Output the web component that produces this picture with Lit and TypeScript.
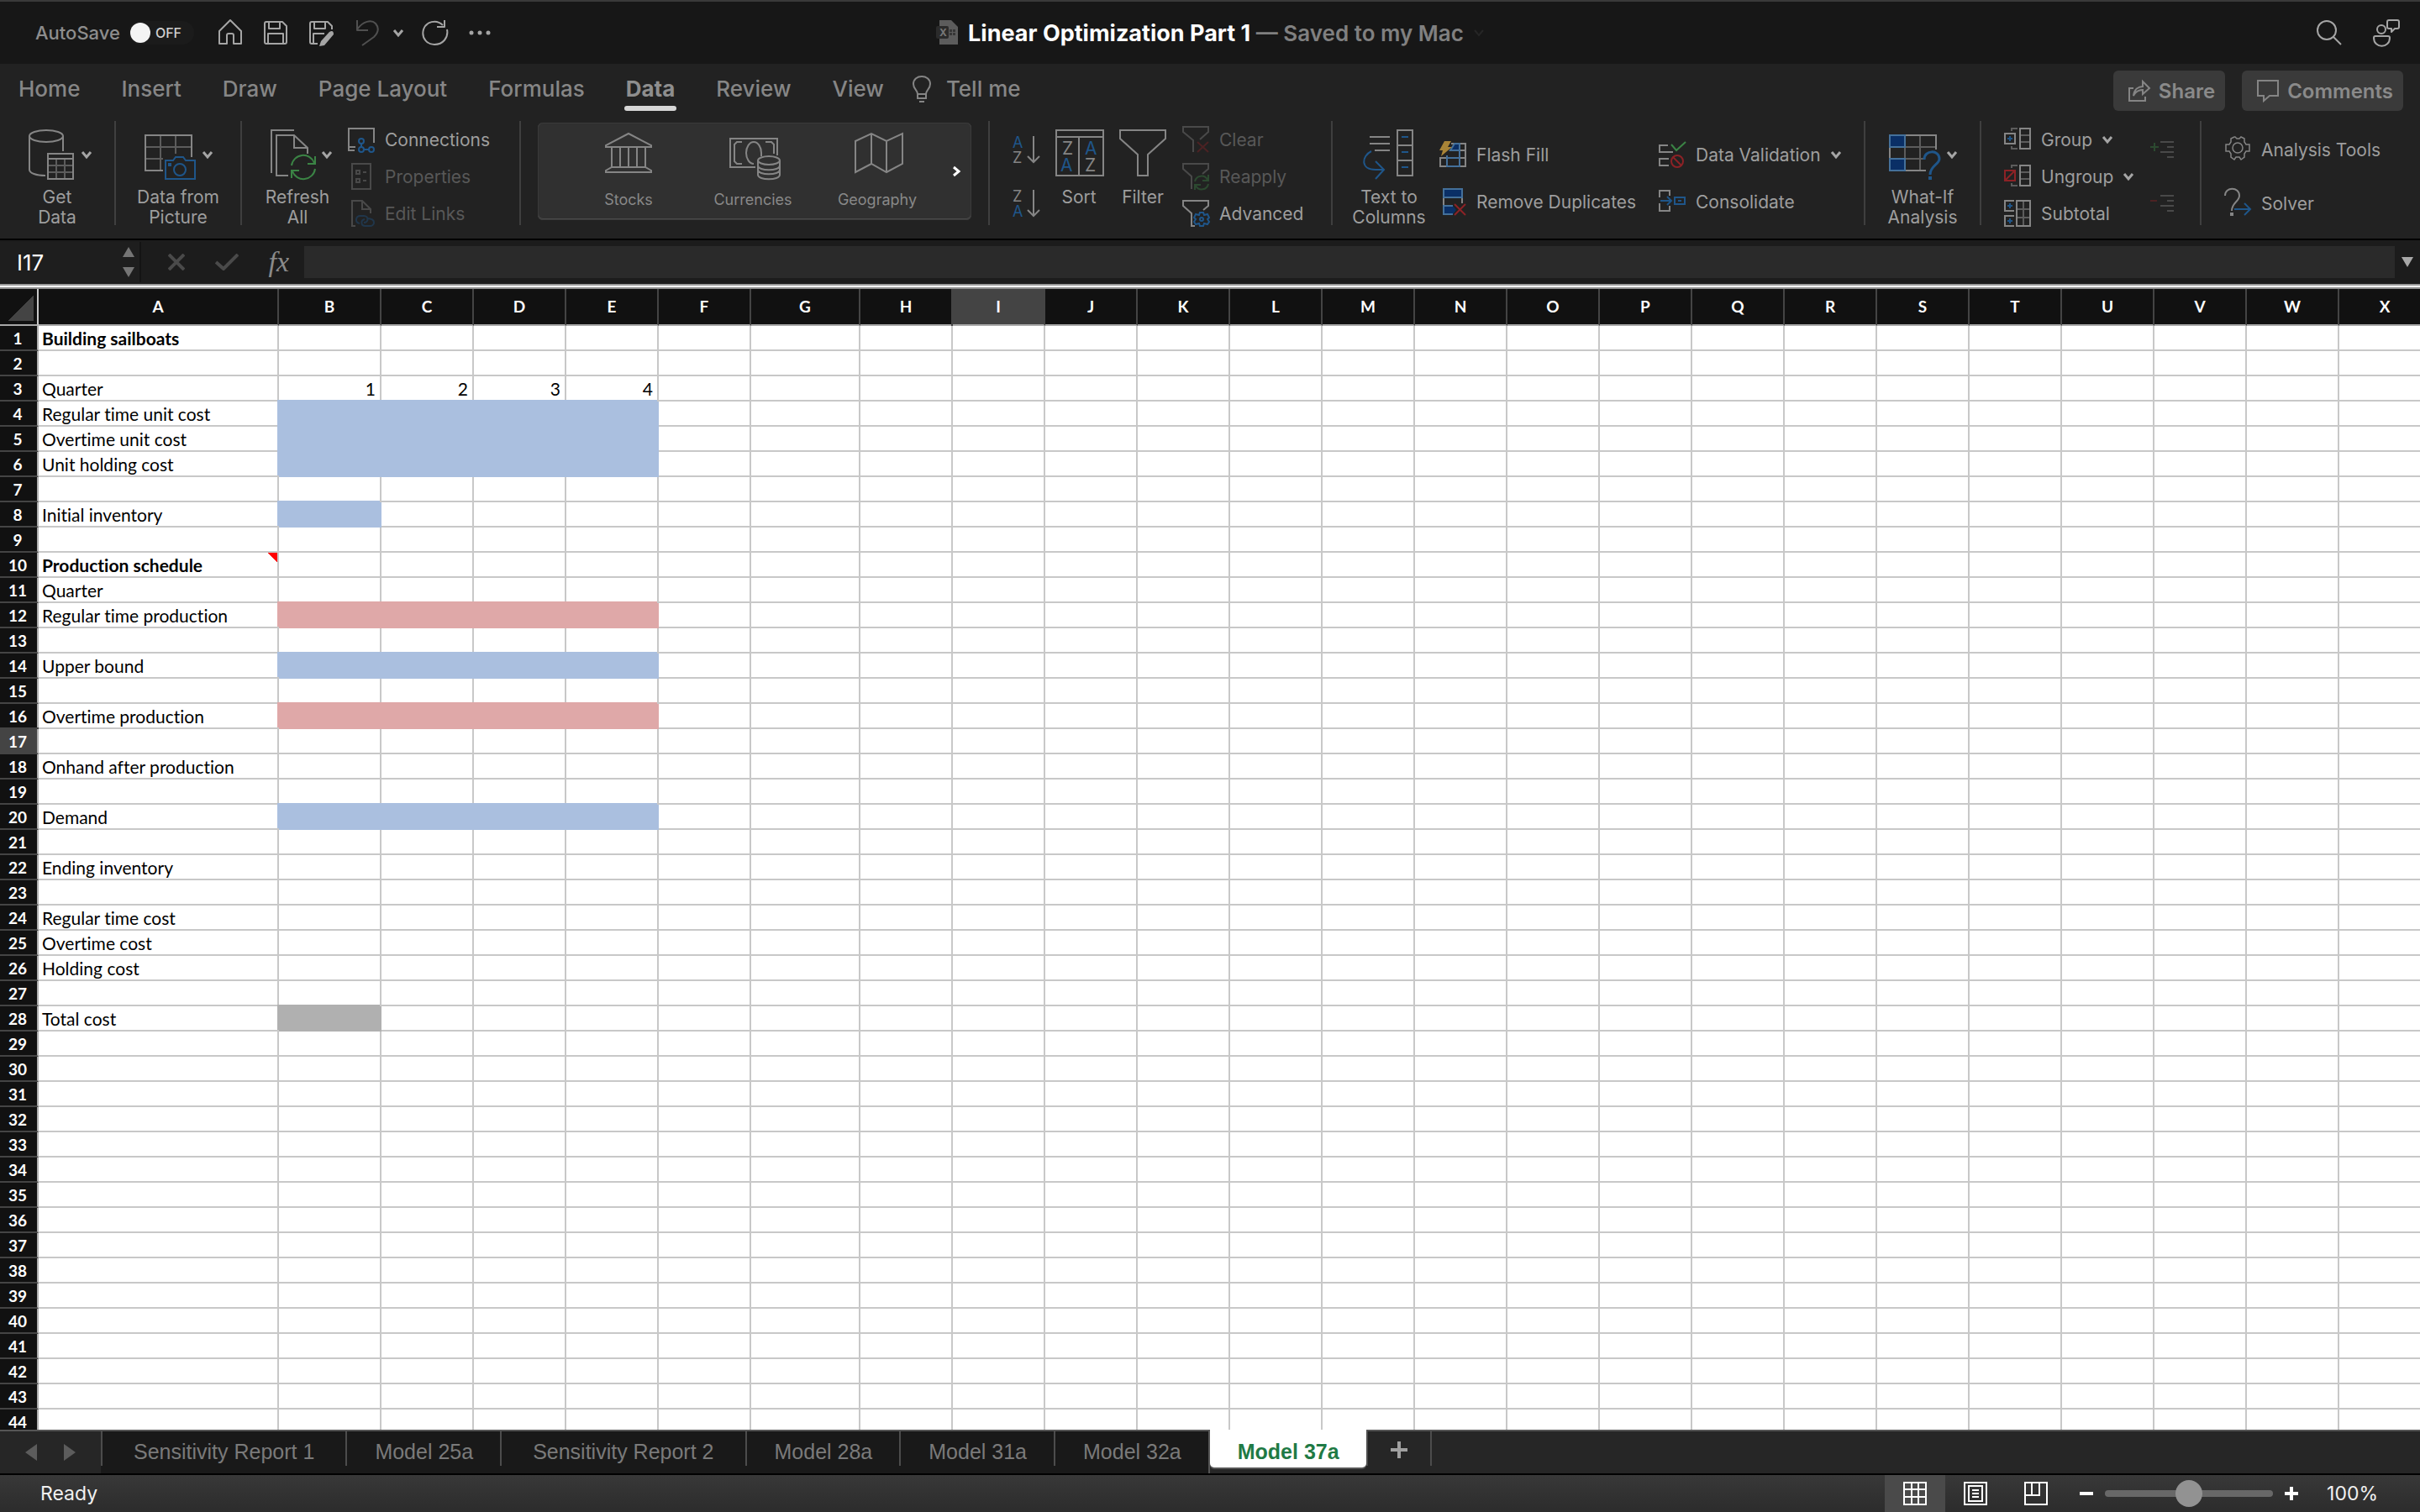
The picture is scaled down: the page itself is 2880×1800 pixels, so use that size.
import { LitElement, html, svg, css, nothing, TemplateResult } from "lit";
import { customElement, state } from "lit/decorators.js";
import { classMap } from "lit/directives/class-map.js";

/* ---------- icon helpers ---------- */

const icon = (w: number, h: number, body: unknown, cls = "") => html`
  <svg class="icon ${cls}" width=${w} height=${h} viewBox="0 0 ${w} ${h}" aria-hidden="true">${body}</svg>`;

const funnel = svg`<path class="s" d="M21 16L31 7V1H1V7L13 17V31"/>`;
const chevron = () => icon(12, 8, svg`<path class="chev" d="M1 1L6 7L11 1"/>`);

const big: Record<string, TemplateResult> = {
  getData: icon(60, 60, svg`
    <ellipse class="s" cx="28" cy="8" rx="20" ry="7"/>
    <path class="s" d="M8 8V48C8 52 16 55 27 55M48 8V26"/>
    <path class="s dim" d="M30 43H60M30 51H60M40 35V59M50 35V59"/>
    <path class="s" d="M30 29H60V59H30ZM30 35H60"/>`),
  picture: icon(60, 60, svg`
    <path class="s dim" d="M20 7V49M38 7V29M2 21H57M2 35H23"/>
    <path class="s" d="M57 33V7H2V49H23"/>
    <path class="blue" d="M26 37H35L38 33H47L50 37H61V59H26Z"/>
    <circle class="blue" cx="43" cy="48" r="7"/>
    <path class="bluefill" d="M29 40h4v4h-4z"/>`),
  refresh: icon(60, 60, svg`
    <path class="s" d="M37 1H10V52M30 55H16V7H37L53 22V29M37 7V22H53"/>
    <path class="green" d="M34 43A14 14 0 0 1 61 40M62 32V41H53M62 47A14 14 0 0 1 35 50M34 58V49H43"/>`),
  stocks: icon(60, 60, svg`
    <path class="s" d="M30 5L57 19V21H3V19ZM10 21V45M20 21V45M30 21V45M40 21V45M50 21V45M10 45H50L57 49V51H3V49Z"/>`),
  currencies: icon(60, 60, svg`
    <path class="s" d="M59 31V11H3V45H33M17 15H11L8 18V38L11 41H17M45 15H52L55 18V29"/>
    <path class="s" d="M40 32V28C40 21 36 15 31 15S22 21 22 28S26 41 31 41"/>
    <ellipse class="s" cx="49" cy="37" rx="13" ry="5"/>
    <path class="s" d="M36 37V54C36 61 62 61 62 54V37M36 43C36 50 62 50 62 43M36 48C36 55 62 55 62 48"/>`),
  geography: icon(60, 60, svg`
    <path class="s" d="M4 14L23 5L41 14L60 5V41L41 51L23 41L4 51ZM23 5V41M41 14V51"/>`),
  sort: icon(60, 60, svg`
    <path class="s" d="M3 1H59V55H3ZM3 9H59M30 9V55"/>
    <text class="tg" x="10" y="30" font-size="21">Z</text>
    <text class="tb" x="8" y="50" font-size="21">A</text>
    <text class="tb" x="37" y="30" font-size="21">A</text>
    <text class="tg" x="37" y="50" font-size="21">Z</text>`),
  filter: icon(60, 60, svg`<path class="s" d="M3 1H57V11L36 30V55H24V30L3 11Z"/>`),
  columns: icon(60, 60, svg`
    <path class="s" d="M7 9H31M7 17H31M13 25H31M40 1H58V55H40ZM40 19H58M40 37H58"/>
    <path class="blue" d="M9 26C-3 32 -4 48 14 48H24M14 38L24 48L14 59M45 9H53M45 27H53M45 45H53"/>`),
  whatIf: icon(60, 60, svg`
    <path class="s dim" d="M20 7V49M38 7V49M2 21H57M2 35H42"/>
    <path class="s" d="M57 24V7H2V49H45"/>
    <path class="cell" d="M2 7H20V21H2ZM2 35H20V49H2Z"/>
    <path class="blue wide" d="M43 36C43 24 61 24 61 35C61 42 50 43 50 54"/>
    <path class="bluefill" d="M48 56h4v4h-4z"/>`),
};

const small: Record<string, TemplateResult> = {
  connections: icon(32, 32, svg`
    <path class="s" d="M8 29H1V3H31V20M1 25H9"/>
    <path class="blue" d="M16 21V25M19 28H25"/>
    <circle class="blue" cx="16" cy="18" r="3"/><circle class="blue" cx="16" cy="28" r="3"/><circle class="blue" cx="28" cy="28" r="3"/>`),
  properties: icon(32, 32, svg`
    <path class="s" d="M5 1H27V31H5ZM10 9h4v4h-4zM10 19h4v4h-4zM18 11h4M18 21h4"/>`),
  editLinks: icon(32, 32, svg`
    <path class="s" d="M9 31H5V1H17L27 11V16M17 1V11H27"/>
    <path class="blue" d="M14 28C8 27 9 19 15 19H19C25 19 25 27 19 27M24 22C34 23 32 31 26 31H21C15 31 15 24 20 23"/>`),
  clear: icon(32, 32, svg`${funnel}<path class="red" d="M18 19L31 31M31 19L18 31"/>`),
  reapply: icon(32, 32, svg`
    <path class="s" d="M24 13L31 7V1H1V7L11 16V31"/>
    <path class="green" d="M15 22A8 8 0 0 1 30 20M31 14V21H24M31 25A8 8 0 0 1 16 27M15 32V26H22"/>`),
  advanced: icon(32, 32, svg`
    <path class="s" d="M25 12L31 7V1H1V7L11 16V31H15"/>
    <path class="blue" d="M21 15h4l1 3 4-1 2 4-2 2 2 3-2 3-4-1-1 3h-4l-1-3-4 1-2-3 2-3-2-2 2-4 4 1z"/>
    <circle class="blue" cx="23" cy="23" r="2"/>`),
  flash: icon(32, 32, svg`
    <path class="s" d="M14 3H31V30H1V20H31M12 11H31M1 20V30M9 30V20M24 3V30"/>
    <path class="cell" d="M24 3V11H13L18 3Z"/>
    <path class="lightblue" d="M24 3V30H9V17M9 20H24M24 11H13"/>
    <path class="bolt" d="M6 0H14L10 7H15L2 18L4 11H0Z"/>`),
  duplicates: icon(32, 32, svg`
    <path class="s" d="M5 11V21M27 11V18"/>
    <path class="cell" d="M5 1H27V11H5Z"/>
    <path class="cellfill" d="M5 21H16L20 26L16 31H5Z"/>
    <path class="lightblue" d="M16 21H5V31H16"/>
    <path class="red" d="M18 19L31 32M31 19L18 32"/>`),
  validation: icon(32, 32, svg`
    <path class="s" d="M11 5H1V13H17M12 21H1V29H12"/>
    <path class="green" d="M15 4L21 11L32 1"/>
    <circle class="red" cx="22" cy="24" r="7"/><path class="red" d="M17 19L27 29"/>`),
  consolidate: icon(32, 32, svg`
    <path class="s" d="M1 11V3H13V9M1 18V27H13V21"/>
    <path class="blue" d="M2 15H14M10 10L15 15L10 20M19 11H31V19H19ZM23 15H27"/>`),
  group: icon(32, 32, svg`
    <path class="s dim" d="M16 3H9V6M16 27H9V24M19 11H31M19 19H31"/>
    <path class="s" d="M19 3H31V27H19ZM1 9H13V21H1Z"/>
    <path class="blue" d="M4 15H10M7 12V18"/>`),
  ungroup: icon(32, 32, svg`
    <path class="s dim" d="M16 3H9V6M16 27H9V24M19 11H31M19 19H31"/>
    <path class="s" d="M19 3H31V27H19Z"/>
    <path class="red" d="M1 9H13V21H1ZM2 20L12 10"/>`),
  subtotal: icon(32, 32, svg`
    <path class="s dim" d="M23 1V31M15 11H31M15 21H31"/>
    <path class="s" d="M15 1H31V31H15ZM12 1H1V13H12M12 19H1V31H12"/>
    <path class="blue" d="M4 7H10M7 4V10M4 25H10M7 22V28"/>`),
  analysis: icon(32, 32, svg`
    <path class="s thin" d="M13 1L15 3H18L20 1L24 3V7L26 10H30V18H26L24 21V25L20 28L18 25H14L12 28L8 25V21L6 18H2V10H6L8 7V3L12 1Z"/>
    <circle class="s thin" cx="16" cy="14" r="6"/>`),
  solver: icon(32, 32, svg`
    <path class="s" d="M1 7C1 -4 18 -4 18 7C18 14 9 15 9 25"/>
    <path class="grayfill" d="M7 27h4v4h-4z"/>
    <path class="blue" d="M12 23H31M24 16L31 23L24 30"/>`),
  showDetail: icon(32, 32, svg`
    <path class="s" d="M14 7H30M22 13H30M14 19H30M22 25H30"/><path class="green" d="M2 13H12M7 8V18"/>`),
  hideDetail: icon(32, 32, svg`
    <path class="s" d="M14 7H30M22 13H30M14 19H30M22 25H30"/><path class="red" d="M2 13H10"/>`),
  az: icon(32, 32, svg`
    <text class="tb" x="0" y="14" font-size="18">A</text><text class="tg" x="0" y="32" font-size="18">Z</text>
    <path class="s" d="M25 0V30M18 24L25 31L32 24"/>`),
  za: icon(32, 32, svg`
    <text class="tg" x="0" y="14" font-size="18">Z</text><text class="tb" x="0" y="32" font-size="18">A</text>
    <path class="s" d="M25 0V30M18 24L25 31L32 24"/>`),
  home: icon(32, 32, svg`<path class="t" d="M3 14L16 1L29 14V29H20V19Q20 17 18 17H14Q12 17 12 19V29H3Z"/>`),
  save: icon(32, 32, svg`
    <path class="t" d="M5 3H24L29 8V27Q29 29 27 29H5Q3 29 3 27V5Q3 3 5 3ZM8 3V11H21V3M7 29V17H25V29"/>`),
  saveEdit: icon(32, 32, svg`
    <path class="t" d="M12 29H5Q3 29 3 27V5Q3 3 5 3H24L29 8V12M8 3V11H21V3M7 29V17H20"/>
    <path class="tfill" d="M26 15Q31 12 31 18L20 31L14 32L16 26Z"/>`),
  undo: icon(32, 32, svg`<path class="t" d="M5 1V13H18M5 12C12 2 22 0 27 5C32 11 29 17 25 21L11 31"/>`),
  redo: icon(32, 32, svg`<path class="t" d="M25 7C17 -1 5 3 2 12C-1 23 7 30 15 30C25 30 32 22 30 12M27 1V9H18"/>`),
  more: icon(32, 32, svg`<g class="tfill"><circle cx="5" cy="16" r="2.5"/><circle cx="15" cy="16" r="2.5"/><circle cx="25" cy="16" r="2.5"/></g>`),
  search: icon(32, 32, svg`<circle class="t" cx="13" cy="13" r="11"/><path class="t" d="M21 21L30 30"/>`),
  presence: icon(32, 32, svg`
    <path class="t" d="M19 1H29Q31 1 31 3V9Q31 11 29 11H26L22 15V11H19Q17 11 17 9V3Q17 1 19 1Z"/>
    <circle class="t" cx="10" cy="12" r="5"/>
    <path class="t" d="M3 20H18Q20 20 20 22C20 35 1 35 1 22Q1 20 3 20Z"/>`),
  bulb: icon(24, 32, svg`
    <path class="s" d="M7 22C7 17 2 16 2 10C2 -2 22 -2 22 10C22 16 17 17 17 22ZM7 22V27H17V22M9 31H15"/>`),
  share: icon(26, 26, svg`
    <path class="s" d="M6 10H1V25H20V20M6 19C7 11 12 8 17 8V2L25 10L17 17V12C12 12 8 15 6 19Z"/>`),
  comment: icon(26, 26, svg`<path class="s" d="M1 1H25V19H15L8 25V19H1Z"/>`),
  workbook: icon(26, 30, svg`
    <path fill="#5c5c5c" d="M4 0H18L26 8V29H4Z"/><path fill="#363636" d="M16 11h3v3h-3zM20 11h3v3h-3zM16 15h3v3h-3zM20 15h3v3h-3z"/>
    <rect fill="#2b2b2b" x="0" y="7" width="15" height="15" rx="2"/>
    <text x="4" y="19" font-size="12" fill="#777">X</text>`),
};

/* ---------- data ---------- */

const COLUMNS: [string, number][] = [
  ["A", 286], ["B", 122], ["C", 110], ["D", 110], ["E", 110], ["F", 110], ["G", 130],
  ..."HIJKLMNOPQRSTUVWX".split("").map((c) => [c, 110] as [string, number]),
];

const LABELS: Record<number, string> = {
  1: "Building sailboats", 3: "Quarter", 4: "Regular time unit cost", 5: "Overtime unit cost",
  6: "Unit holding cost", 8: "Initial inventory", 10: "Production schedule", 11: "Quarter",
  12: "Regular time production", 14: "Upper bound", 16: "Overtime production",
  18: "Onhand after production", 20: "Demand", 22: "Ending inventory", 24: "Regular time cost",
  25: "Overtime cost", 26: "Holding cost", 28: "Total cost",
};

const FILLS: Record<number, [string, string]> = {
  4: ["BCDE", "blue"], 5: ["BCDE", "blue"], 6: ["BCDE", "blue"], 8: ["B", "blue"],
  12: ["BCDE", "pink"], 14: ["BCDE", "blue"], 16: ["BCDE", "pink"], 20: ["BCDE", "blue"], 28: ["B", "gray"],
};

const QUARTERS = "BCDE";
const BOLD_ROWS = [1, 10];
const SHEETS = ["Sensitivity Report 1", "Model 25a", "Sensitivity Report 2", "Model 28a", "Model 31a", "Model 32a", "Model 37a"];
const TABS = ["Home", "Insert", "Draw", "Page Layout", "Formulas", "Data", "Review", "View"];

const iconStyles = css`
  .icon { display: block; flex: none; overflow: visible; fill: none; }
  .icon text { font-family: Inter, "Liberation Sans", sans-serif; }
  .s { stroke: #858585; stroke-width: 2; }
  .s.dim { stroke: #5c5c5c; }
  .s.thin { stroke-width: 1.5; }
  .t { stroke: #a5a5a5; stroke-width: 2; stroke-linejoin: round; }
  .tfill { fill: #a5a5a5; }
  .grayfill { fill: #858585; }
  .blue { stroke: #1f568a; stroke-width: 2; }
  .blue.wide { stroke-width: 3; }
  .bluefill { fill: #1f568a; }
  .lightblue { stroke: #44709a; stroke-width: 2; }
  .cell { stroke: #44709a; stroke-width: 2; fill: #0a2f66; }
  .cellfill { fill: #0a2f66; }
  .green { stroke: #3b8445; stroke-width: 2; }
  .red { stroke: #8c2226; stroke-width: 2; }
  .bolt { fill: #a98437; }
  .chev { stroke: #a5a5a5; stroke-width: 3; }
  .tg { fill: #858585; }
  .tb { fill: #1f568a; }
`;

const controls = css`
  button, input {
    font: inherit; color: inherit; margin: 0; padding: 0; border: 0;
    background: none; border-radius: 0; outline: none;
  }
  button { display: flex; align-items: center; }
`;

/* ---------- title bar ---------- */

@customElement("title-bar")
class TitleBar extends LitElement {
  static styles = [controls, iconStyles, css`
    :host {
      display: grid; grid-template-columns: 1fr auto 1fr; align-items: center;
      height: 74px; padding: 0 24px; background: #171717; border-top: 2px solid #3a3a3a;
      color: #8d8d8d; font-size: 22px;
    }
    .tools { display: flex; align-items: center; gap: 22px; padding-left: 18px; }
    .autosave { display: flex; align-items: center; gap: 10px; font-weight: 500; margin-right: 5px; }
    .toggle { width: 78px; height: 28px; border-radius: 14px; background: #1b1b1b; gap: 6px; color: #d0d0d0; font-size: 16px; font-weight: 500; }
    .knob { width: 24px; height: 24px; border-radius: 50%; background: #f4f4f4; margin-left: 2px; }
    .undo { display: flex; align-items: center; gap: 16px; }
    .off { opacity: 0.4; }
    .title { display: flex; align-items: center; gap: 12px; margin: 0; font-size: 27px; font-weight: 700; white-space: pre; color: #fff; }
    .saved { color: #808080; font-size: 26px; font-weight: 600; }
    .title .chev { stroke: #262626; stroke-width: 2; }
    .right { display: flex; justify-content: flex-end; gap: 36px; }
  `];
  render() {
    return html`
      <div class="tools">
        <label class="autosave">AutoSave
          <button class="toggle" role="switch" aria-checked="false"><span class="knob"></span>OFF</button>
        </label>
        <button aria-label="Home">${small.home}</button>
        <button aria-label="Save">${small.save}</button>
        <button aria-label="Save As">${small.saveEdit}</button>
        <span class="undo">
          <button class="off" aria-label="Undo">${small.undo}</button>
          <button aria-label="Undo history">${chevron()}</button>
        </span>
        <button aria-label="Redo">${small.redo}</button>
        <button aria-label="More">${small.more}</button>
      </div>
      <h1 class="title">${small.workbook}<span>Linear Optimization Part 1<span class="saved"> — Saved to my Mac</span></span>${chevron()}</h1>
      <div class="right">
        <button aria-label="Search">${small.search}</button>
        <button aria-label="Presence">${small.presence}</button>
      </div>`;
  }
}

/* ---------- ribbon ---------- */

@customElement("ribbon-bar")
class RibbonBar extends LitElement {
  static styles = [controls, iconStyles, css`
    :host { display: block; background: #222; color: #9e9e9e; font-size: 21px; border-bottom: 2px solid #000; }
    .tabs { display: flex; align-items: center; justify-content: space-between; height: 60px; padding: 0 20px 0 22px; }
    .tablist { display: flex; gap: 49px; font-size: 26px; font-weight: 500; color: #868686; }
    .tab { height: 60px; border-bottom: 6px solid transparent; line-height: 30px; padding: 6px 0 0; box-sizing: border-box; position: relative; }
    .tab.active { font-weight: 700; color: #8e8e8e; }
    .tab.active::after { content: ""; position: absolute; left: -2px; right: -2px; bottom: -2px; height: 6px; border-radius: 3px; background: #d6d6d6; }
    .tell { gap: 17px; margin-left: -16px; }
    .actions { display: flex; gap: 20px; font-size: 24px; font-weight: 600; color: #8a8a8a; padding-top: 4px; }
    .action { height: 48px; padding: 0 12px 0 18px; gap: 10px; border-radius: 6px; background: #3a3a3a; }
    .body { display: flex; align-items: flex-start; padding: 8px 0; }
    .group { display: flex; height: 132px; flex: none; }
    .sep { width: 2px; height: 124px; background: #3f3f3f; flex: none; }
    .g1 { width: 136px; }
    .g2 { width: 148px; }
    .g3 { width: 330px; padding-left: 12px; box-sizing: border-box; gap: 6px; }
    .g4 { width: 556px; padding: 2px 20px 0; box-sizing: border-box; }
    .g5 { width: 406px; padding-left: 27px; box-sizing: border-box; gap: 9px; }
    .g6 { width: 632px; padding-left: 7px; box-sizing: border-box; }
    .g7 { width: 136px; }
    .g8 { width: 260px; padding-left: 27px; box-sizing: border-box; }
    .g9 { padding-left: 27px; }
    .big { flex: 1; flex-direction: column; padding-top: 10px; gap: 9px; line-height: 24px; text-align: center; justify-content: flex-start; }
    .g3 .big { flex: 0 0 108px; }
    .g5 .big { flex: 0 0 76px; }
    .g6 .big { flex: 0 0 120px; }
    .face { display: flex; align-items: center; gap: 10px; }
    .stack { display: grid; align-content: start; justify-items: start; grid-auto-rows: 44px; }
    .stack.two { grid-auto-rows: 56px; padding-top: 12px; }
    .stack.wide { grid-auto-rows: 64px; padding-top: 2px; }
    .g6 .first { width: 261px; }
    .g8 .first { width: 172px; }
    .small { gap: 12px; white-space: nowrap; }
    .disabled { color: #585858; }
    .disabled .icon { opacity: 0.4; }
    .gallery { display: flex; flex: 1; height: 116px; padding-left: 34px; border-radius: 6px; box-sizing: border-box; background: #303030; box-shadow: inset 0 0 0 1px #3a3a3a, inset 0 -1px 0 1px #4a4a4a; }
    .kind { flex-direction: column; width: 148px; padding-top: 8px; gap: 13px; font-size: 18px; line-height: 22px; justify-content: flex-start; color: #888; }
    .next { margin-left: 16px; }
    .next path { stroke: #fff; stroke-width: 3; }
  `];

  private bigBtn(ic: TemplateResult, a: string, b = "", menu = false) {
    return html`<button class="big"><span class="face">${ic}${menu ? chevron() : nothing}</span><span>${a}${b ? html`<br>${b}` : nothing}</span></button>`;
  }
  private smallBtn(ic: TemplateResult, label: string, opts: { off?: boolean; menu?: boolean } = {}) {
    return html`<button class=${classMap({ small: true, disabled: !!opts.off })} ?disabled=${opts.off}>${ic}<span>${label}</span>${opts.menu ? chevron() : nothing}</button>`;
  }

  render() {
    const sep = html`<span class="sep"></span>`;
    return html`
      <div class="tabs">
        <div class="tablist">
          ${TABS.map((t) => html`<button class=${classMap({ tab: true, active: t === "Data" })}>${t}</button>`)}
          <button class="tab tell">${small.bulb}<span>Tell me</span></button>
        </div>
        <div class="actions">
          <button class="action">${small.share}<span>Share</span></button>
          <button class="action">${small.comment}<span>Comments</span></button>
        </div>
      </div>
      <div class="body">
        <div class="group g1">${this.bigBtn(big.getData, "Get", "Data", true)}</div>${sep}
        <div class="group g2">${this.bigBtn(big.picture, "Data from", "Picture", true)}</div>${sep}
        <div class="group g3">
          ${this.bigBtn(big.refresh, "Refresh", "All", true)}
          <div class="stack">
            ${this.smallBtn(small.connections, "Connections")}
            ${this.smallBtn(small.properties, "Properties", { off: true })}
            ${this.smallBtn(small.editLinks, "Edit Links", { off: true })}
          </div>
        </div>${sep}
        <div class="group g4">
          <div class="gallery">
            <button class="kind">${big.stocks}<span>Stocks</span></button>
            <button class="kind">${big.currencies}<span>Currencies</span></button>
            <button class="kind">${big.geography}<span>Geography</span></button>
            <button class="next" aria-label="More data types">${icon(8, 12, svg`<path d="M1 1L7 6L1 11"/>`)}</button>
          </div>
        </div>${sep}
        <div class="group g5">
          <div class="stack wide">
            <button aria-label="Sort ascending">${small.az}</button>
            <button aria-label="Sort descending">${small.za}</button>
          </div>
          <div class="group">
            ${this.bigBtn(big.sort, "Sort")}
            ${this.bigBtn(big.filter, "Filter")}
          </div>
          <div class="stack">
            ${this.smallBtn(small.clear, "Clear", { off: true })}
            ${this.smallBtn(small.reapply, "Reapply", { off: true })}
            ${this.smallBtn(small.advanced, "Advanced")}
          </div>
        </div>${sep}
        <div class="group g6">
          ${this.bigBtn(big.columns, "Text to", "Columns")}
          <div class="stack two first">
            ${this.smallBtn(small.flash, "Flash Fill")}
            ${this.smallBtn(small.duplicates, "Remove Duplicates")}
          </div>
          <div class="stack two">
            ${this.smallBtn(small.validation, "Data Validation", { menu: true })}
            ${this.smallBtn(small.consolidate, "Consolidate")}
          </div>
        </div>${sep}
        <div class="group g7">${this.bigBtn(big.whatIf, "What-If", "Analysis", true)}</div>${sep}
        <div class="group g8">
          <div class="stack first">
            ${this.smallBtn(small.group, "Group", { menu: true })}
            ${this.smallBtn(small.ungroup, "Ungroup", { menu: true })}
            ${this.smallBtn(small.subtotal, "Subtotal")}
          </div>
          <div class="stack wide">
            <button class="disabled" disabled aria-label="Show Detail">${small.showDetail}</button>
            <button class="disabled" disabled aria-label="Hide Detail">${small.hideDetail}</button>
          </div>
        </div>${sep}
        <div class="group g9">
          <div class="stack wide">
            ${this.smallBtn(small.analysis, "Analysis Tools")}
            ${this.smallBtn(small.solver, "Solver")}
          </div>
        </div>
      </div>`;
  }
}

/* ---------- formula bar ---------- */

@customElement("formula-bar")
class FormulaBar extends LitElement {
  static styles = [controls, css`
    :host { display: flex; align-items: center; height: 52px; background: #1c1c1c; color: #fff; }
    .name { display: flex; align-items: center; justify-content: space-between; width: 168px; height: 48px; box-sizing: border-box; padding: 0 6px 0 20px; border-right: 2px solid #141414; background: #1e1e1e; font-size: 26px; }
    .name input { width: 110px; }
    .spin { display: grid; gap: 12px; }
    .icons { display: flex; align-items: center; width: 194px; justify-content: space-between; padding: 0 18px 0 32px; box-sizing: border-box; }
    .fx { font: italic 34px/40px "Liberation Serif", serif; color: #8a8a8a; }
    .entry { flex: 1; height: 38px; background: #2a2a2a; }
    .more { width: 30px; justify-content: center; }
    svg { display: block; }
  `];
  render() {
    return html`
      <div class="name">
        <input aria-label="Name box" value="I17">
        <div class="spin">
          <button aria-label="Previous"><svg width="14" height="12"><path fill="#757575" d="M7 0L14 12H0Z"/></svg></button>
          <button aria-label="Next"><svg width="14" height="12"><path fill="#757575" d="M7 12L14 0H0Z"/></svg></button>
        </div>
      </div>
      <div class="icons">
        <button aria-label="Cancel"><svg width="20" height="20"><path stroke="#4a4a4a" stroke-width="4" d="M1 1L19 19M19 1L1 19"/></svg></button>
        <button aria-label="Enter"><svg width="28" height="20"><path fill="none" stroke="#4a4a4a" stroke-width="4" d="M1 10L10 18L27 1"/></svg></button>
        <button class="fx" aria-label="Insert function">fx</button>
      </div>
      <input class="entry" aria-label="Formula">
      <button class="more" aria-label="Expand formula bar"><svg width="14" height="12"><path fill="#a8a8a8" d="M0 0H14L7 12Z"/></svg></button>`;
  }
}

/* ---------- sheet ---------- */

@customElement("sheet-grid")
class SheetGrid extends LitElement {
  static styles = css`
    :host { display: block; flex: 1; min-height: 0; overflow: hidden; background: #fff; border-top: 2px solid #9a9a9a; font: 21px/18px Lato, "Liberation Sans", sans-serif; font-variant-ligatures: none; color: #000; }
    .edge { height: 4px; box-sizing: border-box; background: #fff; border-bottom: 2px solid #909090; }
    table { border-collapse: separate; border-spacing: 0; table-layout: fixed; width: max-content; }
    th, td { padding: 2px 0 0; box-sizing: border-box; border: 0 solid #c8c8c8; border-width: 0 2px 2px 0; height: 30px; white-space: nowrap; overflow: hidden; }
    th { background: #111; color: #fff; font-size: 19px; font-weight: 700; text-align: center; }
    thead th { height: 44px; padding-top: 0; border-color: #444; border-bottom-color: #a8a8a8; }
    thead .corner { border-right-color: #c8c8c8; background: linear-gradient(to bottom right, transparent 50%, #444 50%) 10px 8px / 30px 30px no-repeat #111; }
    tbody th { border-color: #444; border-right-color: #b0b0b0; padding-right: 2px; }
    thead .current, tbody .current { background: #444; }
    thead .current { box-shadow: -2px 0 0 #444; border-bottom-color: #a8a8a8; }
    tbody .current { box-shadow: 0 -2px 0 #444; }
    td.text { padding-left: 4px; }
    td.num { padding-right: 5px; text-align: right; }
    td.bold { font-weight: 700; }
    td.note { background: linear-gradient(to bottom left, #f00 50%, transparent 50%) top right / 12px 12px no-repeat; }
    td.blue { background: #aabfdf; border-color: #aabfdf; box-shadow: -2px -2px 0 #aabfdf; }
    td.pink { background: #dfa8a8; border-color: #dfa8a8; box-shadow: -2px -2px 0 #dfa8a8; }
    td.gray { background: #b0b0b0; border-color: #b0b0b0; box-shadow: -2px -2px 0 #b0b0b0; }
  `;
  private cell(row: number, col: string) {
    const fill = FILLS[row];
    const filled = fill && fill[0].includes(col) ? fill[1] : "";
    const text = col === "A" ? LABELS[row] ?? "" : "";
    const q = row === 3 ? QUARTERS.indexOf(col) : -1;
    return html`<td class=${classMap({
      text: !!text, num: q >= 0, bold: !!text && BOLD_ROWS.includes(row), note: row === 10 && col === "A",
      blue: filled === "blue", pink: filled === "pink", gray: filled === "gray",
    })}>${text || (q >= 0 ? q + 1 : nothing)}</td>`;
  }
  render() {
    return html`
      <div class="edge"></div>
      <table>
        <colgroup><col style="width:46px">${COLUMNS.map(([, w]) => html`<col style="width:${w}px">`)}</colgroup>
        <thead><tr><th class="corner" aria-label="Select all"></th>
          ${COLUMNS.map(([c]) => html`<th scope="col" class=${c === "I" ? "current" : ""}>${c}</th>`)}</tr></thead>
        <tbody>
          ${Array.from({ length: 44 }, (_, i) => i + 1).map((r) => html`<tr>
            <th scope="row" class=${r === 17 ? "current" : ""}>${r}</th>${COLUMNS.map(([c]) => this.cell(r, c))}</tr>`)}
        </tbody>
      </table>`;
  }
}

/* ---------- sheet tabs and status bar ---------- */

@customElement("sheet-tabs")
class SheetTabs extends LitElement {
  @state() private active = "Model 37a";
  static styles = [controls, css`
    :host { display: flex; height: 50px; background: #262626; border-top: 2px solid #555; border-bottom: 2px solid #000; color: #7a7a7a; font: 25px/28px "Liberation Sans", Arial, sans-serif; }
    .nav { display: flex; align-items: center; justify-content: space-between; width: 120px; padding: 0 30px; box-sizing: border-box; }
    .nav svg { display: block; }
    .strip { display: flex; background: #191919; }
    .slot { border-left: 2px solid #4c4c4c; height: 41px; }
    .tab { height: 41px; padding: 6px 32px 0 33px; }
    .long .tab { padding: 6px 37px 0; }
    .slot.active { position: relative; border-color: #555; background: #262626; height: 50px; }
    .slot.active .tab { margin-top: -2px; height: 45px; background: #fff; color: #1f7a45; font-weight: 700; border-radius: 0 0 5px 5px; box-shadow: 0 2px 0 #555; }
    .add { width: 74px; height: 39px; padding-top: 2px; justify-content: center; border-left: 2px solid #4c4c4c; border-right: 2px solid #4c4c4c; box-sizing: content-box; }
  `];
  render() {
    return html`
      <div class="nav">
        <button aria-label="Previous sheets"><svg width="14" height="20"><path fill="#5c5c5c" d="M14 0V20L0 10Z"/></svg></button>
        <button aria-label="Next sheets"><svg width="14" height="20"><path fill="#5c5c5c" d="M0 0V20L14 10Z"/></svg></button>
      </div>
      <div class="strip">
        ${SHEETS.map((s) => html`<div class=${classMap({ slot: true, long: s.length > 12, active: s === this.active })}><button class="tab" @click=${() => (this.active = s)}>${s}</button></div>`)}
      </div>
      <button class="add" aria-label="Insert sheet"><svg width="20" height="20"><path stroke="#a0a0a0" stroke-width="4" d="M10 0V20M0 10H20"/></svg></button>`;
  }
}

@customElement("status-bar")
class StatusBar extends LitElement {
  static styles = [controls, css`
    :host { display: flex; align-items: center; justify-content: space-between; height: 44px; padding: 0 50px 0 48px; background: linear-gradient(#383838, #2c2c2c); color: #f0f0f0; font-size: 23px; }
    .right { display: flex; align-items: center; }
    .view { width: 72px; height: 44px; justify-content: center; }
    .view.on { background: #4a4a4a; }
    .zoom { display: flex; align-items: center; gap: 14px; margin: 0 34px 0 16px; }
    .slider { appearance: none; -webkit-appearance: none; width: 200px; height: 32px; }
    .slider::-webkit-slider-runnable-track { height: 8px; border-radius: 4px; background: #686868; }
    .slider::-webkit-slider-thumb { -webkit-appearance: none; width: 32px; height: 32px; margin-top: -12px; border-radius: 50%; background: #929292; }
    svg { display: block; fill: none; stroke: #fff; stroke-width: 2; }
    .sign svg { stroke-width: 4; }
  `];
  render() {
    return html`
      <span>Ready</span>
      <div class="right">
        <button class="view on" aria-label="Normal view"><svg width="28" height="28"><path d="M1 1H27V27H1ZM1 9H27M1 18H27M10 1V27M18 1V27"/></svg></button>
        <button class="view" aria-label="Page layout view"><svg width="28" height="28"><path d="M1 1H27V27H1ZM6 5H22V23H6ZM10 10H18M10 14H18M10 18H18"/></svg></button>
        <button class="view" aria-label="Page break view"><svg width="28" height="28"><path d="M1 1H27V27H1ZM1 16H18V1M9 1V16"/></svg></button>
        <div class="zoom">
          <button class="sign" aria-label="Zoom out"><svg width="16" height="16"><path d="M0 8H16"/></svg></button>
          <input class="slider" type="range" min="0" max="200" value="100" aria-label="Zoom">
          <button class="sign" aria-label="Zoom in"><svg width="16" height="16"><path d="M0 8H16M8 0V16"/></svg></button>
        </div>
        <span>100%</span>
      </div>`;
  }
}

@customElement("app-root")
class AppRoot extends LitElement {
  static styles = css`
    :host { display: flex; flex-direction: column; height: 100vh; overflow: hidden; background: #171717; font-family: Inter, "Liberation Sans", sans-serif; }
  `;
  render() {
    return html`<title-bar></title-bar><ribbon-bar></ribbon-bar><formula-bar></formula-bar>
      <sheet-grid></sheet-grid><sheet-tabs></sheet-tabs><status-bar></status-bar>`;
  }
}
